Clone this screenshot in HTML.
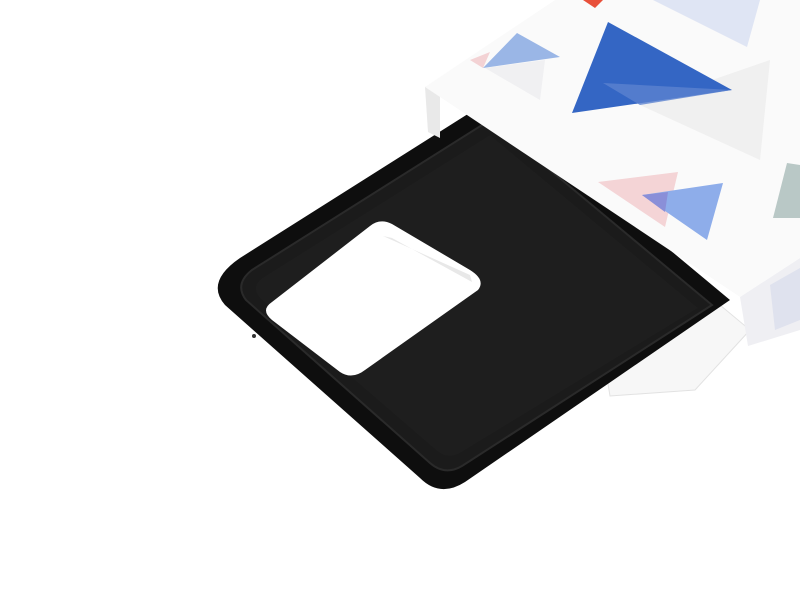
<!DOCTYPE html>
<html><head><meta charset="utf-8"><style>html,body{margin:0;padding:0;background:#fff;width:800px;height:600px;overflow:hidden}</style></head>
<body>
<svg width="800" height="600" viewBox="0 0 800 600" xmlns="http://www.w3.org/2000/svg">
<rect width="800" height="600" fill="#fff"/>
<!-- tray under box -->
<polygon points="600,335 720,305 750,330 695,390 610,396" fill="#f7f7f7" stroke="#e2e2e2" stroke-width="1"/>
<!-- case outer -->
<path d="M240,258 L490,100 L730,300 L465,482 Q440,498 420,478 L225,305 Q205,282 240,258 Z" fill="#0e0e0e"/>
<!-- inner floor -->
<path d="M252,270 L490,120 L712,305 L462,466 Q445,476 430,463 L246,300 Q234,284 252,270 Z" fill="#1b1b1b" stroke="#2a2a2a" stroke-width="2"/>
<path d="M264,277 L490,135 L698,308 L460,453 Q447,460 436,450 L260,298 Q250,286 264,277 Z" fill="#1e1e1e"/>
<circle cx="254" cy="336" r="2" fill="#333"/>
<!-- camera hole -->
<path d="M392,224 L470,270 Q486,280 478,290 L365,370 Q352,380 340,372 L272,320 Q260,310 272,302 L370,226 Q380,218 392,224 Z" fill="#fff"/>
<polygon points="383,236 470,275 472,282 392,238" fill="#e8e8e8"/>
<!-- box side faces -->
<polygon points="425,87 440,80 440,138 428,132" fill="#e9e9e9"/>
<polygon points="740,297 800,258 800,330 748,346" fill="#efeff3"/>
<polygon points="770,285 800,268 800,320 775,330" fill="#dfe2ee"/>
<!-- box top face -->
<polygon points="425,87 555,0 800,0 800,258 740,297" fill="#fafafa"/>
<polygon points="770,60 760,160 640,105" fill="#f0f0f0"/>
<polygon points="485,68 545,60 540,100" fill="#f0f0f2"/>
<polygon points="583,0 603,0 595,8" fill="#e8503a"/>
<polygon points="653,0 760,0 747,47" fill="#dfe5f4"/>
<polygon points="608,22 732,90 572,113" fill="#3466c4"/>
<polygon points="603,83 732,90 640,105" fill="#5b82d0" opacity="0.8"/>
<polygon points="517,33 560,57 483,68" fill="#9ab6e6"/>
<polygon points="470,60 490,52 483,68" fill="#f3d2d4"/>
<polygon points="598,182 678,172 665,227" fill="#f4d4d6"/>
<polygon points="642,195 723,183 707,240" fill="#8eadea"/>
<polygon points="642,195 668,192 665,212" fill="#8a8fd8"/>
<polygon points="787,163 800,165 800,218 773,218" fill="#b9c8c6"/>
</svg>
</body></html>
